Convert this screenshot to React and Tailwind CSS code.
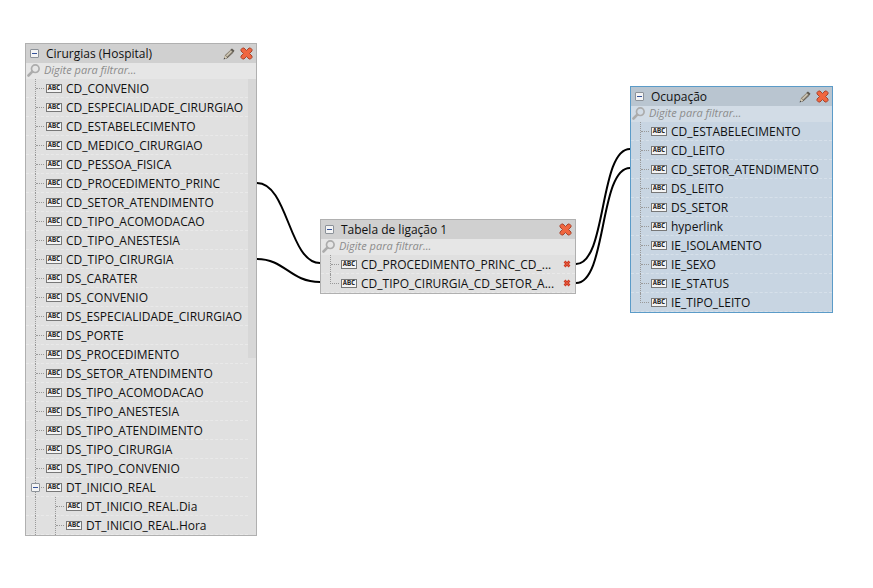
import { useState } from "react";

const hospitalFields = [
  { name: "CD_CONVENIO" },
  { name: "CD_ESPECIALIDADE_CIRURGIAO" },
  { name: "CD_ESTABELECIMENTO" },
  { name: "CD_MEDICO_CIRURGIAO" },
  { name: "CD_PESSOA_FISICA" },
  { name: "CD_PROCEDIMENTO_PRINC" },
  { name: "CD_SETOR_ATENDIMENTO" },
  { name: "CD_TIPO_ACOMODACAO" },
  { name: "CD_TIPO_ANESTESIA" },
  { name: "CD_TIPO_CIRURGIA" },
  { name: "DS_CARATER" },
  { name: "DS_CONVENIO" },
  { name: "DS_ESPECIALIDADE_CIRURGIAO" },
  { name: "DS_PORTE" },
  { name: "DS_PROCEDIMENTO" },
  { name: "DS_SETOR_ATENDIMENTO" },
  { name: "DS_TIPO_ACOMODACAO" },
  { name: "DS_TIPO_ANESTESIA" },
  { name: "DS_TIPO_ATENDIMENTO" },
  { name: "DS_TIPO_CIRURGIA" },
  { name: "DS_TIPO_CONVENIO" },
  { name: "DT_INICIO_REAL", parent: true },
  { name: "DT_INICIO_REAL.Dia", child: true },
  { name: "DT_INICIO_REAL.Hora", child: true },
];

const linkFields = [
  { name: "CD_PROCEDIMENTO_PRINC_CD_...", removable: true },
  { name: "CD_TIPO_CIRURGIA_CD_SETOR_A...", removable: true, last: true },
];

const ocupacaoFields = [
  { name: "CD_ESTABELECIMENTO" },
  { name: "CD_LEITO" },
  { name: "CD_SETOR_ATENDIMENTO" },
  { name: "DS_LEITO" },
  { name: "DS_SETOR" },
  { name: "hyperlink" },
  { name: "IE_ISOLAMENTO" },
  { name: "IE_SEXO" },
  { name: "IE_STATUS" },
  { name: "IE_TIPO_LEITO", last: true },
];

const themes = {
  gray: {
    box: "border-[#b0b0b0] bg-[#e0e0e0]",
    header: "bg-[#d0d0d0]",
    filter: "bg-[#e6e6e6]",
    line: "border-[#e9e9e9]",
  },
  blue: {
    box: "border-[#5b9bc8] bg-[#c8d5e2]",
    header: "bg-[#b9c5d0]",
    filter: "bg-[#d2dce6]",
    line: "border-[#d6e0ea]",
  },
};

const CloseIcon = () => (
  <svg viewBox="0 0 13 13" className="size-[13px]" aria-hidden="true">
    <path
      d="M1 2.5L2.5 1H4l2.500 2.500L9 1h1.500L12 2.500V4L9.500 6.500 12 9v1.500L10.500 12H9L6.500 9.500 4 12H2.500L1 10.500V9l2.500-2.500L1 4z"
      fill="#f0663f"
      stroke="#a8452e"
      strokeWidth="1"
      strokeLinejoin="round"
    />
  </svg>
);

const RemoveIcon = () => (
  <svg viewBox="0 0 8 8" className="size-2" aria-hidden="true">
    <path d="M1.500 1.500l5 5M6.500 1.500l-5 5" stroke="#cf3a22" strokeWidth="2.600" />
    <path d="M2 2l4 4M6 2l-4 4" stroke="#e2583c" strokeWidth="1" />
  </svg>
);

const PencilIcon = () => (
  <svg viewBox="0 0 12 12" className="size-3" aria-hidden="true">
    <path d="M1 11l1-4 6-5.500 2.500 2.500-6 6z" fill="#8a8274" />
    <path d="M3 7.500l5-5 1 1-5 5z" fill="#d0c9b8" />
    <path d="M7.500 1.500L9 .5l2.500 2.300-1.200 1.700z" fill="#5f5a52" />
    <path d="M1 11l.9-3.500 2.300 2.300z" fill="#d9cfb8" />
    <path d="M.6 11.400l.5-1.900 1.400 1.300z" fill="#444" />
    <path d="M3.500 10.500l6.500-6" stroke="#58524a" strokeWidth="0.800" />
  </svg>
);

const SearchIcon = () => (
  <svg viewBox="0 0 13 13" className="size-[13px] shrink-0" fill="none" aria-hidden="true">
    <circle cx="8.300" cy="4.700" r="3.800" stroke="#acacac" strokeWidth="1.700" />
    <path d="M5.300 7.700L1.500 11.500" stroke="#acacac" strokeWidth="2.600" strokeLinecap="round" />
  </svg>
);

const Toggle = ({ label, onClick, className = "" }) => (
  <button
    type="button"
    aria-label={label}
    onClick={onClick}
    className={`flex size-[9px] shrink-0 items-center justify-center rounded-[1px] border border-[#8c9299] bg-[#f4f4f4] ${className}`}
  >
    <span className="h-px w-[5px] bg-[#34529a]" />
  </button>
);

const FieldRow = ({ field, line, onToggle }) => (
  <li className={`relative flex h-[19px] items-center border-b border-dashed pl-[9px] ${line}`}>
    {field.child && (
      <span className="-mb-px w-5 shrink-0 self-stretch border-l border-dotted border-[#999]" />
    )}
    <span
      className={`-mb-px w-[9px] shrink-0 self-stretch border-dotted border-[#999] ${
        field.last ? "" : "border-l"
      }`}
    >
      <span
        className={`block h-[10px] border-b border-dotted border-[#999] ${
          field.last ? "border-l" : ""
        }`}
      />
    </span>
    {field.parent && (
      <Toggle label={field.name} onClick={onToggle} className="absolute top-[5px] left-[5px]" />
    )}
    <span className="ml-0.5 flex h-[9px] w-4 shrink-0 items-center justify-center border border-[#777] bg-[#f4f4f4] font-['DejaVu_Sans_Mono',monospace] text-[7px] leading-[7px] font-bold text-[#222]">
      ABC
    </span>
    <span className="ml-1 flex-1 pt-px whitespace-nowrap">{field.name}</span>
    {field.removable && (
      <button type="button" aria-label={`Remover ${field.name}`} className="mr-1">
        <RemoveIcon />
      </button>
    )}
  </li>
);

const TableNode = ({ title, fields, theme = "gray", editable, scrollbar, className }) => {
  const [filter, setFilter] = useState("");
  const [open, setOpen] = useState(true);
  const [expanded, setExpanded] = useState(true);
  const colors = themes[theme];

  const visible = fields.filter(
    (f) => f.name.toLowerCase().includes(filter.toLowerCase()) && (expanded || !f.child)
  );

  return (
    <section className={`absolute border ${colors.box} ${className}`}>
      <header className={`flex h-[19px] items-center pr-[3px] pl-1 ${colors.header}`}>
        <Toggle label={title} onClick={() => setOpen(!open)} />
        <h2 className="ml-[7px] flex-1 whitespace-nowrap">{title}</h2>
        {editable && (
          <button type="button" aria-label="Editar" className="mr-[5px]">
            <PencilIcon />
          </button>
        )}
        <button type="button" aria-label="Fechar">
          <CloseIcon />
        </button>
      </header>
      {open && (
        <>
          <label className={`flex h-4 items-center pb-0.5 pl-px ${colors.filter}`}>
            <SearchIcon />
            <input
              type="text"
              aria-label={`Filtrar ${title}`}
              placeholder="Digite para filtrar..."
              value={filter}
              onChange={(e) => setFilter(e.target.value)}
              className="ml-1 h-4 min-w-0 flex-1 bg-transparent text-[11px] italic outline-none placeholder:text-[#8c8c8c]"
            />
          </label>
          <div className="flex items-start">
            <ul className="min-w-0 flex-1">
              {visible.map((field) => (
                <FieldRow
                  key={field.name}
                  field={field}
                  line={colors.line}
                  onToggle={() => setExpanded(!expanded)}
                />
              ))}
            </ul>
            {scrollbar && <div className="h-[279px] w-2 bg-[#d7d7d7]" />}
          </div>
        </>
      )}
    </section>
  );
};

const App = () => {
  return (
    <main className="relative min-h-screen overflow-hidden bg-white font-['Open_Sans','Noto_Sans',sans-serif] text-[12px] leading-4 text-[#111]">
      <svg className="absolute inset-0 size-full" fill="none" stroke="#000" strokeWidth="2">
        <path d="M257 183C288 183 289 263 320 263" />
        <path d="M257 259C285 259 290 282 320 282" />
        <path d="M576 264C607 264 599 149 630 149" />
        <path d="M576 283C607 283 599 168 630 168" />
      </svg>
      <TableNode
        title="Cirurgias (Hospital)"
        fields={hospitalFields}
        editable
        scrollbar
        className="top-[43px] left-[25px] w-[232px]"
      />
      <TableNode
        title="Tabela de ligação 1"
        fields={linkFields}
        className="top-[219px] left-[320px] w-64"
      />
      <TableNode
        title="Ocupação"
        fields={ocupacaoFields}
        theme="blue"
        editable
        className="top-[86px] left-[630px] w-[203px]"
      />
    </main>
  );
};

export default App;
